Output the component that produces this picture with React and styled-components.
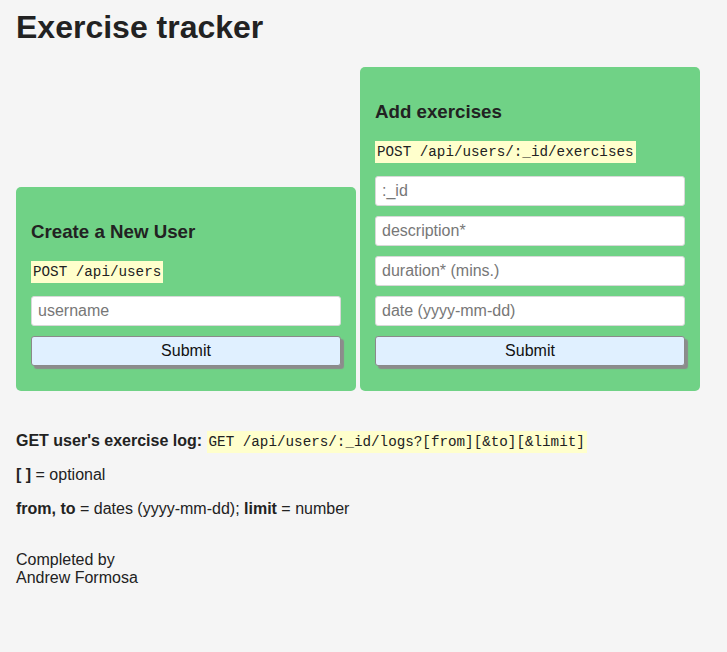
import React from "react";
import styled, { createGlobalStyle } from "styled-components";

const Global = createGlobalStyle`
  * { box-sizing: border-box; }
  html, body { margin: 0; padding: 0; background: #f5f5f5; }
  body {
    font-family: "Liberation Sans", Arial, sans-serif;
    font-size: 16px;
    color: #222;
  }
`;

const Page = styled.div`
  padding: 9px 16px 40px;
`;

const Title = styled.h1`
  margin: 0 0 21px;
  font-size: 32px;
  font-weight: bold;
  line-height: normal;
`;

const Cards = styled.div`
  display: flex;
  align-items: flex-end;
  gap: 4px;
`;

const Card = styled.form`
  width: 340px;
  background: #70d286;
  border-radius: 5px;
  padding: 15px 15px 25px;
`;

const CardTitle = styled.h3`
  margin: 18.72px 0;
  font-size: 18.72px;
  font-weight: bold;
  line-height: normal;
`;

const Code = styled.code`
  display: ${(p) => (p.$block ? "inline-block" : "inline")};
  font-family: "Liberation Mono", "DejaVu Sans Mono", monospace;
  font-size: 14.25px;
  line-height: ${(p) => (p.$block ? "16px" : "normal")};
  padding: 3px 2px;
  background: #ffffcc;
  color: #222;
`;

const Fields = styled.div`
  display: flex;
  flex-direction: column;
  gap: 10px;
  margin-top: 13px;
`;

const Input = styled.input`
  width: 100%;
  height: 30px;
  border: 1px solid #d8d8d8;
  border-radius: 3px;
  background: #fff;
  padding: 0 6px;
  font-family: "Liberation Sans", Arial, sans-serif;
  font-size: 16px;
  color: #222;
  &::placeholder { color: #777; }
`;

const Button = styled.button`
  width: 100%;
  height: 30px;
  border: 1px solid #8a8a8a;
  border-radius: 3px;
  background: #e0f0ff;
  box-shadow: 3px 3px 1px #8c8c8c;
  font-family: "Liberation Sans", Arial, sans-serif;
  font-size: 16px;
  color: #111;
  padding: 0;
`;

const Info = styled.div`
  margin-top: 41px;
`;

const Para = styled.p`
  margin: 16px 0;
  line-height: normal;
`;

const Footer = styled.p`
  margin: 33px 0 0;
  line-height: 18px;
`;

function Form({ title, endpoint, fields }) {
  return (
    <Card onSubmit={(e) => e.preventDefault()}>
      <CardTitle>{title}</CardTitle>
      <Code $block>{endpoint}</Code>
      <Fields>
        {fields.map((f) => (
          <Input key={f} type="text" placeholder={f} />
        ))}
        <Button type="submit">Submit</Button>
      </Fields>
    </Card>
  );
}

export default function App() {
  return (
    <Page>
      <Global />
      <Title>Exercise tracker</Title>
      <Cards>
        <Form title="Create a New User" endpoint="POST /api/users" fields={["username"]} />
        <Form
          title="Add exercises"
          endpoint="POST /api/users/:_id/exercises"
          fields={[":_id", "description*", "duration* (mins.)", "date (yyyy-mm-dd)"]}
        />
      </Cards>
      <Info>
        <Para>
          <b>GET user's exercise log:</b> <Code>GET /api/users/:_id/logs?[from][&amp;to][&amp;limit]</Code>
        </Para>
        <Para>
          <b>[ ]</b> = optional
        </Para>
        <Para>
          <b>from, to</b> = dates (yyyy-mm-dd); <b>limit</b> = number
        </Para>
        <Footer>
          Completed by
          <br />
          Andrew Formosa
        </Footer>
      </Info>
    </Page>
  );
}
